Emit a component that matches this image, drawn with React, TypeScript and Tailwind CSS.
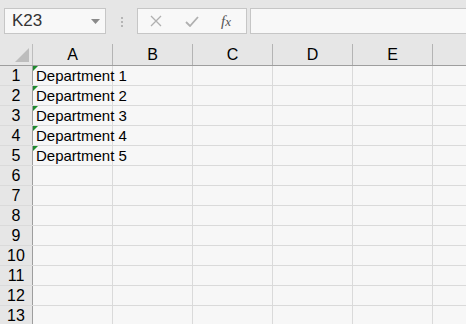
const cols = ["A", "B", "C", "D", "E", ""];
const rows = Array.from({ length: 13 }, (_, i) => i + 1);
const data: Record<number, string> = {
  1: "Department 1",
  2: "Department 2",
  3: "Department 3",
  4: "Department 4",
  5: "Department 5",
};

function NameBox() {
  return (
    <div className="ml-[4px] flex h-[26px] w-[102px] items-center justify-between border border-[#c6c6c6] bg-[#f8f8f8] pl-[7px] pr-[5px]">
      <span className="text-[17px] text-[#333]">K23</span>
      <svg width="9" height="5" viewBox="0 0 9 5">
        <path d="M0 0h9L4.5 5z" fill="#8a8a8a" />
      </svg>
    </div>
  );
}

function FormulaButtons() {
  return (
    <div className="flex h-[26px] w-[110px] items-center border border-[#c6c6c6] bg-[#f8f8f8]">
      <svg className="ml-[12px]" width="12" height="12" viewBox="0 0 12 12">
        <path d="M1 1l10 10M11 1L1 11" stroke="#b0b0b0" strokeWidth="1.3" fill="none" />
      </svg>
      <svg className="ml-[23px]" width="14" height="11" viewBox="0 0 14 11">
        <path d="M1 6l4 4 8-9" stroke="#b0b0b0" strokeWidth="1.8" fill="none" />
      </svg>
      <span
        className="ml-[22px] text-[15px] italic text-[#555]"
        style={{ fontFamily: '"Liberation Serif", serif' }}
      >
        f<span className="text-[13px]">x</span>
      </span>
    </div>
  );
}

export default function App() {
  return (
    <div
      className="h-[324px] w-[466px] overflow-hidden bg-[#e6e6e6]"
      style={{ fontFamily: '"Liberation Sans", Arial, sans-serif' }}
    >
      <div className="flex h-[44px] items-start pt-[8px]">
        <NameBox />
        <div className="ml-[15px] mr-[14px] mt-[9px] flex flex-col gap-[2px]">
          <span className="h-[2px] w-[2px] bg-[#b5b5b5]" />
          <span className="h-[2px] w-[2px] bg-[#b5b5b5]" />
          <span className="h-[2px] w-[2px] bg-[#b5b5b5]" />
        </div>
        <FormulaButtons />
        <div className="ml-[3px] h-[26px] flex-1 border border-r-0 border-[#c6c6c6] bg-[#f8f8f8]" />
      </div>

      <div className="flex h-[22px] border-b border-[#9e9e9e]">
        <div className="flex w-[33px] shrink-0 items-end justify-end border-r border-[#bdbdbd] pb-[3px] pr-[3px]">
          <svg width="14" height="14" viewBox="0 0 14 14">
            <path d="M14 0v14H0z" fill="#bdbdbd" />
          </svg>
        </div>
        {cols.map((c, i) => (
          <div
            key={i}
            className="flex w-[80px] shrink-0 items-center justify-center border-r border-[#b4b4b4] pt-[1px] text-[16px] text-black"
          >
            {c}
          </div>
        ))}
      </div>

      <div className="bg-[#f7f7f7]">
        {rows.map((r) => (
          <div key={r} className="flex h-[20px] border-b border-[#dadada]">
            <div className="flex w-[33px] shrink-0 items-center justify-center border-r border-[#9e9e9e] bg-[#e6e6e6] text-[16px] leading-none text-black">
              {r}
            </div>
            {cols.map((_, i) => (
              <div
                key={i}
                className="relative flex w-[80px] shrink-0 items-center border-r border-[#dadada] pl-[3px]"
              >
                {i === 0 && data[r] && (
                  <>
                    <svg className="absolute left-0 top-0" width="5" height="5" viewBox="0 0 5 5">
                      <path d="M0 0h5L0 5z" fill="#1e8a2e" />
                    </svg>
                    <span className="whitespace-nowrap text-[15px] leading-none text-black">
                      {data[r]}
                    </span>
                  </>
                )}
              </div>
            ))}
          </div>
        ))}
      </div>
    </div>
  );
}
